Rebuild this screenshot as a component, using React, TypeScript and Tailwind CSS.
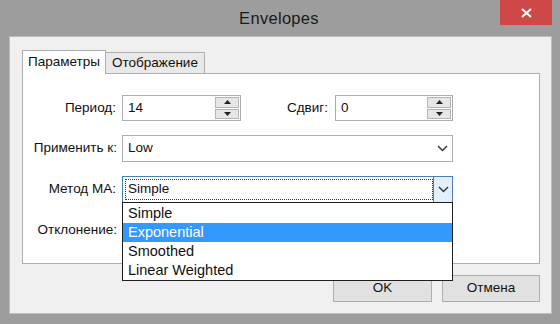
import React from "react";

const font = { fontFamily: '"Liberation Sans", Arial, sans-serif' };

function Spinner() {
  return (
    <div className="flex flex-col gap-[1px] w-[24px] h-[22px] my-auto mr-[1px]">
      <div className="flex-1 flex items-center justify-center bg-[#e6e6e6] border border-[#b4b4b4]">
        <svg width="7" height="4" viewBox="0 0 7 4"><path d="M0 4 L3.5 0 L7 4 Z" fill="#222" /></svg>
      </div>
      <div className="flex-1 flex items-center justify-center bg-[#e6e6e6] border border-[#b4b4b4]">
        <svg width="7" height="4" viewBox="0 0 7 4"><path d="M0 0 L3.5 4 L7 0 Z" fill="#222" /></svg>
      </div>
    </div>
  );
}

function Chevron() {
  return (
    <svg width="11" height="7" viewBox="0 0 11 7">
      <path d="M1 1 L5.5 5.5 L10 1" fill="none" stroke="#333" strokeWidth="1.4" />
    </svg>
  );
}

function SpinBox({ value, width }: { value: string; width: string }) {
  return (
    <div className={`flex h-[26px] ${width} border border-[#abadb3] bg-white`}>
      <div className="flex-1 flex items-center pl-[5px] text-[13.5px] text-[#111]">{value}</div>
      <Spinner />
    </div>
  );
}

export default function App() {
  return (
    <div className="w-[560px] h-[324px] bg-[#9d9d9d] flex flex-col overflow-hidden" style={font}>
      <div className="relative h-[36px] flex items-center justify-center">
        <span className="text-[16.5px] text-[#1a1a1a] tracking-[0.3px] pr-[2px]">Envelopes</span>
        <div className="absolute right-[8px] top-0 w-[52px] h-[25px] bg-[#cf4848] flex items-center justify-center">
          <svg width="11" height="10" viewBox="0 0 11 10">
            <path d="M1 1 L10 9 M10 1 L1 9" stroke="#fff" strokeWidth="2" />
          </svg>
        </div>
      </div>

      <div className="ml-[9px] mr-[8px] h-[278px] bg-[#f0f0f0] border border-[#bdbdbd] pl-[12px] pr-[11px] pt-[12px]">
        <div className="flex items-end h-[24px]">
          <div className="h-[24px] w-[84px] bg-white border border-[#adadad] border-b-0 flex items-center justify-center text-[13.5px] text-[#111] relative z-10 -mb-[1px] pb-[1px]">
            Параметры
          </div>
          <div className="h-[21px] w-[99px] bg-[#e9e9e9] border border-[#adadad] border-l-0 border-b-0 flex items-center justify-center text-[13.5px] text-[#111]">
            Отображение
          </div>
        </div>

        <div className="relative h-[191px] bg-white border border-[#adadad] pt-[21px]">
          <div className="flex flex-col gap-[14px]">
            <div className="flex items-center">
              <div className="w-[99px] text-right text-[13.5px] text-[#111] pr-[6px]">Период:</div>
              <SpinBox value="14" width="w-[119px]" />
              <div className="w-[94px] text-right text-[13.5px] text-[#111] pr-[7px]">Сдвиг:</div>
              <SpinBox value="0" width="w-[118px]" />
            </div>
            <div className="flex items-center">
              <div className="w-[99px] text-right text-[13.5px] text-[#111] pr-[5px]">Применить к:</div>
              <div className="flex h-[27px] w-[331px] border border-[#abadb3] bg-white">
                <div className="flex-1 flex items-center pl-[5px] text-[13.5px] text-[#111]">Low</div>
                <div className="w-[20px] flex items-center justify-center"><Chevron /></div>
              </div>
            </div>
            <div className="flex items-center">
              <div className="w-[99px] text-right text-[13.5px] text-[#111] pr-[6px]">Метод MA:</div>
              <div className="flex h-[27px] w-[331px] border border-[#4a7fb0] bg-white p-[2px]">
                <div className="flex-1 flex items-center pl-[2px] text-[13.5px] text-[#111] border border-dotted border-[#333]">Simple</div>
                <div className="w-[19px] -my-[2px] -mr-[2px] flex items-center justify-center bg-[#e3f0fb] border-l border-[#4a7fb0]"><Chevron /></div>
              </div>
            </div>
            <div className="flex items-center h-[26px]">
              <div className="w-[99px] text-right text-[13.5px] text-[#111] pr-[5px]">Отклонение:</div>
            </div>
          </div>

          <div className="absolute left-[99px] top-[128px] w-[331px] h-[79px] bg-white border border-[#1e1e1e] pt-[1px] flex flex-col text-[14.5px] text-[#111] z-20">
            <div className="h-[19px] flex items-center pl-[5px]">Simple</div>
            <div className="h-[19px] flex items-center pl-[5px] bg-[#3399ff] text-white">Exponential</div>
            <div className="h-[19px] flex items-center pl-[5px]">Smoothed</div>
            <div className="h-[19px] flex items-center pl-[5px]">Linear Weighted</div>
          </div>
        </div>

        <div className="flex justify-end gap-[10px] mt-[11px]">
          <button className="w-[99px] h-[27px] bg-[#e1e1e1] border border-[#adadad] text-[13.5px] text-[#111]">OK</button>
          <button className="w-[98px] h-[27px] bg-[#e1e1e1] border border-[#adadad] text-[13.5px] text-[#111]">Отмена</button>
        </div>
      </div>
    </div>
  );
}
